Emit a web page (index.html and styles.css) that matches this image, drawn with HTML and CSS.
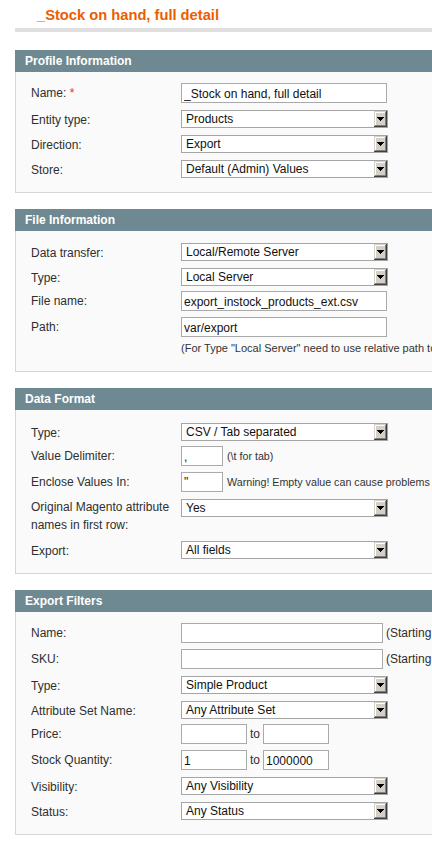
FILE: index.html
```html
<!DOCTYPE html>
<html>
<head>
<meta charset="utf-8">
<title>_Stock on hand, full detail</title>
<link rel="stylesheet" href="styles.css">
</head>
<body>
<div class="page">
  <div class="content-header"><h3 class="title">_Stock on hand, full detail</h3></div>

  <div class="section">
    <div class="head">Profile Information</div>
    <div class="fieldset">
      <div class="row inp"><div class="lbl">Name: <span class="req">*</span></div><div class="val"><input class="text w206" type="text" value="_Stock on hand, full detail"></div></div>
      <div class="row sel"><div class="lbl">Entity type:</div><div class="val"><div class="select"><span class="opt">Products</span><span class="btn"><svg width="7" height="4" viewBox="0 0 7 4" shape-rendering="crispEdges"><rect x="0" y="0" width="7" height="1"/><rect x="1" y="1" width="5" height="1"/><rect x="2" y="2" width="3" height="1"/><rect x="3" y="3" width="1" height="1"/></svg></span></div></div></div>
      <div class="row sel"><div class="lbl">Direction:</div><div class="val"><div class="select"><span class="opt">Export</span><span class="btn"><svg width="7" height="4" viewBox="0 0 7 4" shape-rendering="crispEdges"><rect x="0" y="0" width="7" height="1"/><rect x="1" y="1" width="5" height="1"/><rect x="2" y="2" width="3" height="1"/><rect x="3" y="3" width="1" height="1"/></svg></span></div></div></div>
      <div class="row sel"><div class="lbl">Store:</div><div class="val"><div class="select"><span class="opt">Default (Admin) Values</span><span class="btn"><svg width="7" height="4" viewBox="0 0 7 4" shape-rendering="crispEdges"><rect x="0" y="0" width="7" height="1"/><rect x="1" y="1" width="5" height="1"/><rect x="2" y="2" width="3" height="1"/><rect x="3" y="3" width="1" height="1"/></svg></span></div></div></div>
    </div>
  </div>

  <div class="section">
    <div class="head">File Information</div>
    <div class="fieldset">
      <div class="row sel"><div class="lbl">Data transfer:</div><div class="val"><div class="select"><span class="opt">Local/Remote Server</span><span class="btn"><svg width="7" height="4" viewBox="0 0 7 4" shape-rendering="crispEdges"><rect x="0" y="0" width="7" height="1"/><rect x="1" y="1" width="5" height="1"/><rect x="2" y="2" width="3" height="1"/><rect x="3" y="3" width="1" height="1"/></svg></span></div></div></div>
      <div class="row sel"><div class="lbl">Type:</div><div class="val"><div class="select"><span class="opt">Local Server</span><span class="btn"><svg width="7" height="4" viewBox="0 0 7 4" shape-rendering="crispEdges"><rect x="0" y="0" width="7" height="1"/><rect x="1" y="1" width="5" height="1"/><rect x="2" y="2" width="3" height="1"/><rect x="3" y="3" width="1" height="1"/></svg></span></div></div></div>
      <div class="row inp"><div class="lbl">File name:</div><div class="val"><input class="text w206" type="text" value="export_instock_products_ext.csv"></div></div>
      <div class="row inp"><div class="lbl">Path:</div><div class="val"><input class="text w206" type="text" value="var/export"></div></div>
      <div class="note-row">(For Type "Local Server" need to use relative path to Magento install var dir)</div>
    </div>
  </div>

  <div class="section">
    <div class="head">Data Format</div>
    <div class="fieldset">
      <div class="row sel"><div class="lbl">Type:</div><div class="val"><div class="select"><span class="opt">CSV / Tab separated</span><span class="btn"><svg width="7" height="4" viewBox="0 0 7 4" shape-rendering="crispEdges"><rect x="0" y="0" width="7" height="1"/><rect x="1" y="1" width="5" height="1"/><rect x="2" y="2" width="3" height="1"/><rect x="3" y="3" width="1" height="1"/></svg></span></div></div></div>
      <div class="row inp"><div class="lbl">Value Delimiter:</div><div class="val"><input class="text w42" type="text" value=","><span class="hint">(\t for tab)</span></div></div>
      <div class="row inp"><div class="lbl">Enclose Values In:</div><div class="val"><input class="text w42" type="text" value="&quot;"><span class="hint">Warning! Empty value can cause problems with CSV format.</span></div></div>
      <div class="row sel tall"><div class="lbl two">Original Magento attribute names in first row:</div><div class="val"><div class="select"><span class="opt">Yes</span><span class="btn"><svg width="7" height="4" viewBox="0 0 7 4" shape-rendering="crispEdges"><rect x="0" y="0" width="7" height="1"/><rect x="1" y="1" width="5" height="1"/><rect x="2" y="2" width="3" height="1"/><rect x="3" y="3" width="1" height="1"/></svg></span></div></div></div>
      <div class="row sel"><div class="lbl">Export:</div><div class="val"><div class="select"><span class="opt">All fields</span><span class="btn"><svg width="7" height="4" viewBox="0 0 7 4" shape-rendering="crispEdges"><rect x="0" y="0" width="7" height="1"/><rect x="1" y="1" width="5" height="1"/><rect x="2" y="2" width="3" height="1"/><rect x="3" y="3" width="1" height="1"/></svg></span></div></div></div>
    </div>
  </div>

  <div class="section">
    <div class="head">Export Filters</div>
    <div class="fieldset">
      <div class="row inp"><div class="lbl">Name:</div><div class="val"><input class="text w202" type="text" value=""><span class="after">(Starting with)</span></div></div>
      <div class="row inp"><div class="lbl">SKU:</div><div class="val"><input class="text w202" type="text" value=""><span class="after">(Starting with)</span></div></div>
      <div class="row sel"><div class="lbl">Type:</div><div class="val"><div class="select"><span class="opt">Simple Product</span><span class="btn"><svg width="7" height="4" viewBox="0 0 7 4" shape-rendering="crispEdges"><rect x="0" y="0" width="7" height="1"/><rect x="1" y="1" width="5" height="1"/><rect x="2" y="2" width="3" height="1"/><rect x="3" y="3" width="1" height="1"/></svg></span></div></div></div>
      <div class="row sel"><div class="lbl">Attribute Set Name:</div><div class="val"><div class="select"><span class="opt">Any Attribute Set</span><span class="btn"><svg width="7" height="4" viewBox="0 0 7 4" shape-rendering="crispEdges"><rect x="0" y="0" width="7" height="1"/><rect x="1" y="1" width="5" height="1"/><rect x="2" y="2" width="3" height="1"/><rect x="3" y="3" width="1" height="1"/></svg></span></div></div></div>
      <div class="row inp"><div class="lbl">Price:</div><div class="val"><input class="text w66" type="text" value=""><span class="to">to</span><input class="text w66" type="text" value=""></div></div>
      <div class="row inp"><div class="lbl">Stock Quantity:</div><div class="val"><input class="text w66" type="text" value="1"><span class="to">to</span><input class="text w66" type="text" value="1000000"></div></div>
      <div class="row sel"><div class="lbl">Visibility:</div><div class="val"><div class="select"><span class="opt">Any Visibility</span><span class="btn"><svg width="7" height="4" viewBox="0 0 7 4" shape-rendering="crispEdges"><rect x="0" y="0" width="7" height="1"/><rect x="1" y="1" width="5" height="1"/><rect x="2" y="2" width="3" height="1"/><rect x="3" y="3" width="1" height="1"/></svg></span></div></div></div>
      <div class="row sel"><div class="lbl">Status:</div><div class="val"><div class="select"><span class="opt">Any Status</span><span class="btn"><svg width="7" height="4" viewBox="0 0 7 4" shape-rendering="crispEdges"><rect x="0" y="0" width="7" height="1"/><rect x="1" y="1" width="5" height="1"/><rect x="2" y="2" width="3" height="1"/><rect x="3" y="3" width="1" height="1"/></svg></span></div></div></div>
    </div>
  </div>
</div>
</body>
</html>
```

FILE: styles.css
```css
html, body {
  margin: 0;
  padding: 0;
  background: #fff;
  overflow: hidden;
}

body {
  font-family: "Liberation Sans", Arial, sans-serif;
  font-size: 12px;
  color: #2f2f2f;
}

.page {
  width: 640px;
  padding-top: 6px;
}

.content-header {
  margin-left: 15px;
  padding: 0 0 4px 22px;
  border-bottom: 4px solid #dfdfdf;
  margin-bottom: 18px;
}

.title {
  margin: 0;
  font-size: 14.7px;
  line-height: 18px;
  font-weight: bold;
  color: #eb5e00;
}

.section {
  margin-left: 15px;
  margin-bottom: 16px;
}

.head {
  height: 22px;
  box-sizing: border-box;
  padding: 1px 10px 0;
  line-height: 21px;
  background: #6f8992;
  color: #fff;
  font-weight: bold;
  font-size: 12px;
}

.fieldset {
  background: #fafafa;
  border: 1px solid #d6d6d6;
  border-top: 0;
  padding: 9px 15px 10.5px;
}

.row {
  display: flex;
  align-items: flex-start;
}

.row.inp {
  padding: 2px 0 3.8px;
}

.row.sel {
  padding: 3.5px 0 3.3px;
}

.row.sel.tall {
  padding-bottom: 4px;
}

.lbl {
  width: 150px;
  flex: none;
  height: 18px;
  box-sizing: border-box;
  padding-top: 1px;
  line-height: 18px;
  white-space: nowrap;
}

.lbl.two {
  height: auto;
  padding-top: 0;
  margin-top: -1.5px;
  white-space: normal;
}

.req {
  color: #eb340a;
}

.val {
  display: flex;
  align-items: center;
  white-space: nowrap;
}

.text {
  box-sizing: border-box;
  height: 20px;
  border: 1px solid #aaa;
  background: #fff;
  font-family: "Liberation Sans", Arial, sans-serif;
  font-size: 12px;
  line-height: 17px;
  color: #111;
  padding: 1px 2px 0;
  margin: 0;
  outline: none;
  border-radius: 0;
}

.w206 { width: 206px; }
.w202 { width: 202px; }
.w42 { width: 42px; }
.w66 { width: 66px; }

.select {
  box-sizing: border-box;
  width: 207px;
  height: 18px;
  border: 1px solid #a5a5a5;
  background: #fff;
  display: flex;
}

.opt {
  flex: 1;
  padding: 1px 0 0 4px;
  line-height: 15px;
  color: #111;
  white-space: nowrap;
  overflow: hidden;
}

.btn {
  width: 13px;
  flex: none;
  background: #d4d0c8;
  box-shadow: inset -1px -1px #404040, inset 1px 1px #d4d0c8, inset -2px -2px #808080, inset 2px 2px #fff;
  display: flex;
  align-items: center;
  justify-content: center;
}

.btn svg {
  display: block;
  fill: #000;
}

.hint {
  margin-left: 4px;
  font-size: 10.7px;
  color: #333;
}

.after {
  margin-left: 3px;
  color: #2f2f2f;
}

.to {
  margin: 0 3px 0 3px;
  color: #2f2f2f;
}

.note-row {
  margin-left: 150px;
  font-size: 11px;
  line-height: 14px;
  padding-bottom: 6px;
  color: #333;
  white-space: nowrap;
}
```
